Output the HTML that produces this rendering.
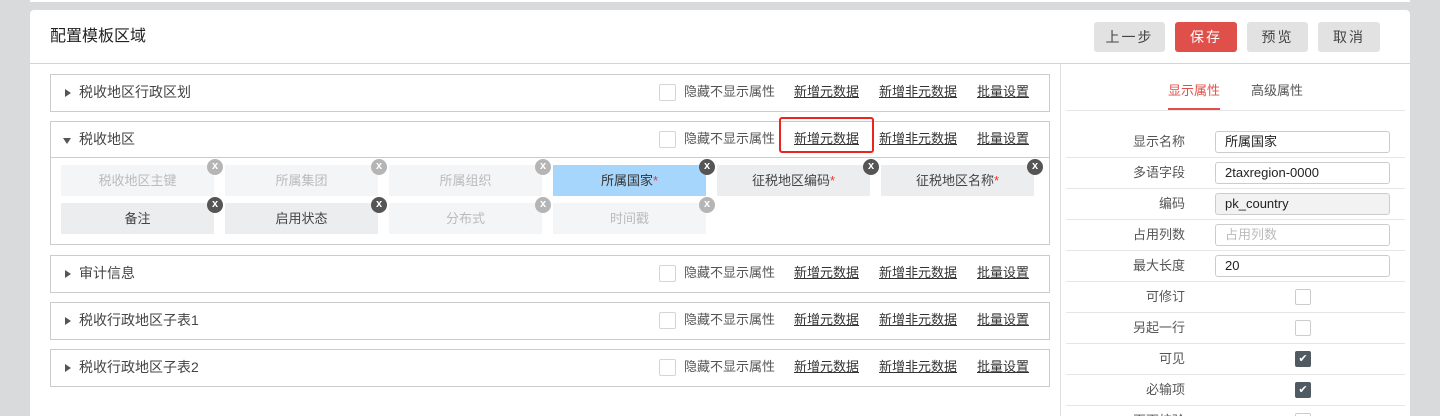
<!DOCTYPE html>
<html><head><meta charset="utf-8"><style>
*{box-sizing:border-box;margin:0;padding:0}
html,body{width:1440px;height:416px;overflow:hidden}
body{background:#d9dadc;font-family:"Liberation Sans","Noto Sans CJK SC",sans-serif;font-size:13px;color:#333;position:relative}
.abs{position:absolute}
.top{left:30px;top:0;width:1380px;height:2px;background:#fff}
.card{left:30px;top:10px;width:1380px;height:406px;background:#fff;border-radius:4px 4px 0 0}
.title{left:50px;top:25px;font-size:16px;line-height:24px;color:#222}
.hline{left:30px;top:63px;width:1380px;height:1px;background:#d5d5d5}
.btn{top:22px;height:30px;border-radius:3px;background:#e2e2e2;color:#444;font-size:14px;text-align:center;line-height:30px;letter-spacing:2px}
.sec{left:50px;width:1000px;border:1px solid #ccc;background:#fff}
.sh{height:36px;position:relative;line-height:34px}
.sh .nm{position:absolute;left:28px;top:0;font-size:14px;color:#444}
.tri{position:absolute;left:14px;top:14px;width:0;height:0;border-top:4px solid transparent;border-bottom:4px solid transparent;border-left:6px solid #555}
.tri.d{top:16px;left:12px;border-left:4px solid transparent;border-right:4px solid transparent;border-top:6px solid #555;border-bottom:0}
.cb{position:absolute;left:608px;top:9px;width:17px;height:17px;border:1px solid #d5d5d5;border-radius:2px}
.hd{position:absolute;left:633px;top:0;color:#555}
.lk{position:absolute;top:0;text-decoration:underline;color:#333}
.chip{position:absolute;width:153px;height:31px;text-align:center;line-height:31px;color:#bbb;background:#f4f5f7}
.chip.a{background:#ebedef;color:#444}
.chip.s{background:#a6d6fb;color:#333}
.x{position:absolute;right:-9px;top:-6px;width:16px;height:16px;border-radius:50%;background:#555;color:#fff;font-size:11px;line-height:15px;text-align:center;font-weight:bold;font-family:"Liberation Sans",sans-serif}
.x.g{background:#b5b5b5}
.r{color:#e33}
.rp{left:1060px;top:64px;width:1px;height:352px;background:#ddd}
.row{position:absolute;left:1066px;width:339px;height:31px;border-bottom:1px solid #e6e6e6;overflow:hidden}
.row .l{position:absolute;right:220px;top:0;line-height:30px;color:#555;white-space:nowrap}
.row .in{position:absolute;left:149px;top:4px;width:175px;height:22px;border:1px solid #ccc;border-radius:3px;padding-left:9px;line-height:20px;color:#222}
.row .c{position:absolute;left:229px;top:7px;width:16px;height:16px;border:1px solid #ccc;border-radius:2px}
.row .c.k{background:#4f5a63;border-color:#4f5a63;color:#fff;font-size:11px;text-align:center;line-height:15px}
</style></head><body>
<div class="abs top"></div>
<div class="abs card"></div>
<div class="abs title">配置模板区域</div>
<div class="abs hline"></div>
<div class="abs btn" style="left:1094px;width:71px">上一步</div>
<div class="abs btn" style="left:1175px;width:62px;background:#e0504b;color:#fff">保存</div>
<div class="abs btn" style="left:1247px;width:61px">预览</div>
<div class="abs btn" style="left:1318px;width:62px">取消</div>

<div class="abs sec" style="top:74px"><div class="sh"><span class="tri"></span><span class="nm">税收地区行政区划</span><span class="cb"></span><span class="hd">隐藏不显示属性</span><span class="lk" style="left:743px">新增元数据</span><span class="lk" style="left:828px">新增非元数据</span><span class="lk" style="left:926px">批量设置</span></div></div>

<div class="abs sec" style="top:121px;height:124px"><div class="sh" style="border-bottom:1px solid #ccc"><span class="tri d"></span><span class="nm">税收地区</span><span class="cb"></span><span class="hd">隐藏不显示属性</span><span class="lk" style="left:743px">新增元数据</span><span class="lk" style="left:828px">新增非元数据</span><span class="lk" style="left:926px">批量设置</span></div></div>
<div class="abs" style="left:779px;top:117px;width:95px;height:36px;border:2px solid #e8261e;border-radius:3px"></div>

<div class="chip" style="left:61px;top:165px">税收地区主键<span class="x g">x</span></div>
<div class="chip" style="left:225px;top:165px">所属集团<span class="x g">x</span></div>
<div class="chip" style="left:389px;top:165px">所属组织<span class="x g">x</span></div>
<div class="chip s" style="left:553px;top:165px">所属国家<span class="r">*</span><span class="x">x</span></div>
<div class="chip a" style="left:717px;top:165px">征税地区编码<span class="r">*</span><span class="x">x</span></div>
<div class="chip a" style="left:881px;top:165px">征税地区名称<span class="r">*</span><span class="x">x</span></div>
<div class="chip a" style="left:61px;top:203px">备注<span class="x">x</span></div>
<div class="chip a" style="left:225px;top:203px">启用状态<span class="x">x</span></div>
<div class="chip" style="left:389px;top:203px">分布式<span class="x g">x</span></div>
<div class="chip" style="left:553px;top:203px">时间戳<span class="x g">x</span></div>

<div class="abs sec" style="top:255px"><div class="sh"><span class="tri"></span><span class="nm">审计信息</span><span class="cb"></span><span class="hd">隐藏不显示属性</span><span class="lk" style="left:743px">新增元数据</span><span class="lk" style="left:828px">新增非元数据</span><span class="lk" style="left:926px">批量设置</span></div></div>
<div class="abs sec" style="top:302px"><div class="sh"><span class="tri"></span><span class="nm">税收行政地区子表1</span><span class="cb"></span><span class="hd">隐藏不显示属性</span><span class="lk" style="left:743px">新增元数据</span><span class="lk" style="left:828px">新增非元数据</span><span class="lk" style="left:926px">批量设置</span></div></div>
<div class="abs sec" style="top:349px"><div class="sh"><span class="tri"></span><span class="nm">税收行政地区子表2</span><span class="cb"></span><span class="hd">隐藏不显示属性</span><span class="lk" style="left:743px">新增元数据</span><span class="lk" style="left:828px">新增非元数据</span><span class="lk" style="left:926px">批量设置</span></div></div>

<div class="abs rp"></div>
<div class="abs" style="left:1168px;top:81px;line-height:20px;color:#e0504b">显示属性</div>
<div class="abs" style="left:1251px;top:81px;line-height:20px;color:#555">高级属性</div>
<div class="abs" style="left:1066px;top:110px;width:339px;height:1px;background:#e6e6e6"></div>
<div class="abs" style="left:1168px;top:108px;width:52px;height:2px;background:#e0504b"></div>

<div class="row" style="top:127px"><span class="l">显示名称</span><span class="in">所属国家</span></div>
<div class="row" style="top:158px"><span class="l">多语字段</span><span class="in">2taxregion-0000</span></div>
<div class="row" style="top:189px"><span class="l">编码</span><span class="in" style="background:#f2f2f2">pk_country</span></div>
<div class="row" style="top:220px"><span class="l">占用列数</span><span class="in" style="color:#bbb">占用列数</span></div>
<div class="row" style="top:251px"><span class="l">最大长度</span><span class="in">20</span></div>
<div class="row" style="top:282px"><span class="l">可修订</span><span class="c"></span></div>
<div class="row" style="top:313px"><span class="l">另起一行</span><span class="c"></span></div>
<div class="row" style="top:344px"><span class="l">可见</span><span class="c k">✔</span></div>
<div class="row" style="top:375px"><span class="l">必输项</span><span class="c k">✔</span></div>
<div class="row" style="top:406px;height:10px;border-bottom:0"><span class="l">页面校验</span><span class="c"></span></div>
</body></html>
